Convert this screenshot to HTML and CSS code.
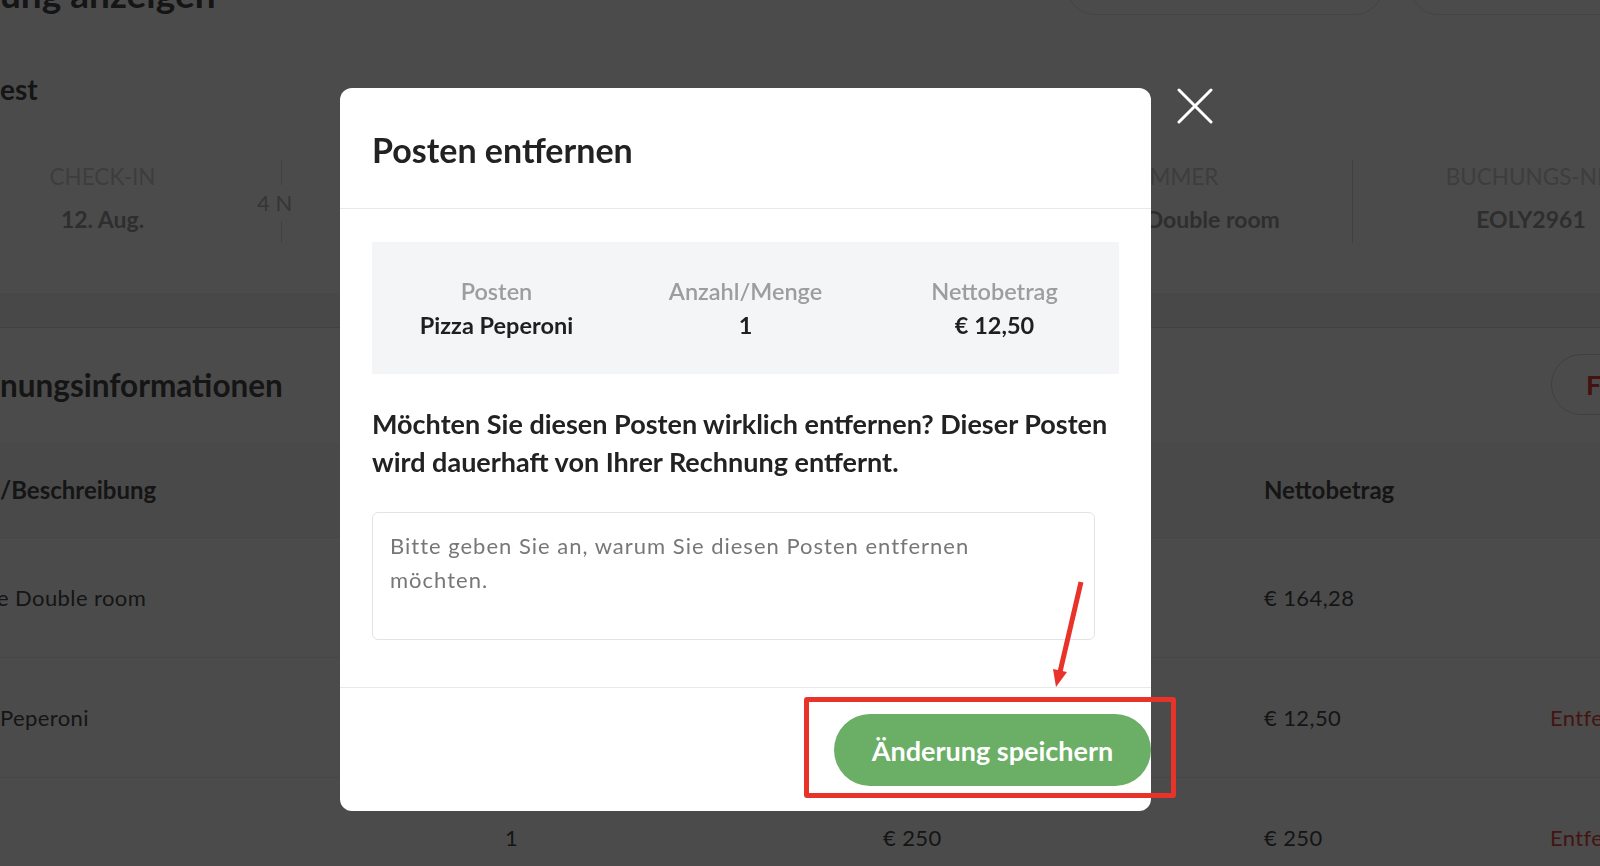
FILE: index.html
```html
<!DOCTYPE html>
<html lang="de">

<head>
  <title>Buchung anzeigen</title>
  <meta charset="UTF-8">
  <meta name="viewport" content="width=device-width, initial-scale=1.0">
  <link rel="stylesheet" href="styles.css">
</head>

<body>

<div class="page">
  <div class="summary">
    <div class="page-head">
      <h1 class="page-title">ung anzeigen</h1>
      <div class="head-actions">
        <span class="pill pill-wide"></span>
        <span class="pill"></span>
      </div>
    </div>

    <h2 class="guest">est</h2>

    <div class="stay">
      <div class="stay-col">
        <span class="stay-label">CHECK-IN</span>
        <span class="stay-value">12. Aug.</span>
      </div>
      <div class="stay-col">
        <span class="nights">4 N</span>
        <span class="stay-label">CHECK-OUT</span>
        <span class="stay-value">16. Aug.</span>
      </div>
      <div class="stay-col">
        <span class="stay-label">GÄSTE</span>
        <span class="stay-value">2</span>
      </div>
      <div class="stay-col">
        <span class="stay-label">ZIMMER</span>
        <span class="stay-value">Deluxe Double room</span>
      </div>
      <div class="stay-col">
        <span class="stay-label">BUCHUNGS-NR.</span>
        <span class="stay-value">EOLY2961</span>
      </div>
    </div>
  </div>

  <div class="invoice">
    <div class="invoice-head">
      <h2 class="section-title">nungsinformationen</h2>
      <button class="outline-btn">Fehler melden</button>
    </div>

    <div class="items">
      <div class="items-row items-header">
        <span>/Beschreibung</span>
        <span>Anzahl/Menge</span>
        <span>Preis</span>
        <span>Nettobetrag</span>
        <span></span>
      </div>
      <div class="items-row">
        <span class="cut">e Double room</span>
        <span>4</span>
        <span>€ 41,07</span>
        <span>€ 164,28</span>
        <span></span>
      </div>
      <div class="items-row">
        <span>Peperoni</span>
        <span>1</span>
        <span>€ 12,50</span>
        <span>€ 12,50</span>
        <span class="remove">Entfernen</span>
      </div>
      <div class="items-row">
        <span></span>
        <span>1</span>
        <span>€ 250</span>
        <span>€ 250</span>
        <span class="remove">Entfernen</span>
      </div>
    </div>
  </div>
</div>

<div class="overlay">
  <div class="modal">
    <div class="modal-head">
      <h3 class="modal-title">Posten entfernen</h3>
    </div>

    <div class="modal-body">
      <div class="item-box">
        <div class="item-cell">
          <span class="item-label">Posten</span>
          <span class="item-value">Pizza Peperoni</span>
        </div>
        <div class="item-cell">
          <span class="item-label">Anzahl/Menge</span>
          <span class="item-value">1</span>
        </div>
        <div class="item-cell">
          <span class="item-label">Nettobetrag</span>
          <span class="item-value">€ 12,50</span>
        </div>
      </div>

      <p class="question">Möchten Sie diesen Posten wirklich entfernen? Dieser Posten wird dauerhaft von Ihrer Rechnung entfernt.</p>

      <textarea class="reason" placeholder="Bitte geben Sie an, warum Sie diesen Posten entfernen möchten."></textarea>
    </div>

    <div class="modal-foot">
      <button class="save-btn">Änderung speichern</button>
    </div>

    <button class="close-btn" aria-label="Schließen">
      <svg width="36" height="36" viewBox="0 0 36 36">
        <path d="M2 2 L34 34 M34 2 L2 34" stroke="#fff" stroke-width="3" stroke-linecap="round" fill="none"/>
      </svg>
    </button>
  </div>

  <!-- Markierung aus dem Screenshot -->
  <div class="mark-box"></div>
  <svg class="mark-arrow" width="60" height="130" viewBox="0 0 60 130">
    <path d="M41 12 L20 102" stroke="#e8322a" stroke-width="5" fill="none"/>
    <polygon points="16,117 27,102 13,99" fill="#e8322a"/>
  </svg>
</div>

</body>

</html>
```

FILE: styles.css
```css
* {
  box-sizing: border-box;
}

body {
  margin: 0;
  width: 1600px;
  height: 866px;
  overflow: hidden;
  background: #f4f5f5;
  font-family: Lato, "Noto Sans", sans-serif;
  color: #4a4a4a;
}

/* page behind the dialog */

.summary {
  background: #fff;
  height: 293px;
}

.page-head {
  display: flex;
  justify-content: space-between;
  height: 35px;
}

.page-title {
  margin: -28px 0 0;
  font-size: 37px;
  line-height: 44px;
  font-weight: 700;
}

.head-actions {
  display: flex;
  gap: 27px;
  margin-top: -41px;
  margin-right: -60px;
}

.pill {
  width: 250px;
  height: 56px;
  border: 1px solid #e2e2e2;
  border-radius: 28px;
}

.pill-wide {
  width: 316px;
}

.guest {
  margin: 37px 0 0;
  font-size: 28px;
  line-height: 34px;
  font-weight: 700;
}

.stay {
  display: flex;
  margin: 54px 0 0 -76px;
}

.stay-col {
  position: relative;
  flex: 0 0 357px;
  display: flex;
  flex-direction: column;
  align-items: center;
  padding: 4px 0 9px;
  border-left: 1px solid #dadada;
}

.stay-col:first-child {
  border-left: none;
}

.stay-label {
  font-size: 22.5px;
  line-height: 26px;
  color: #cfcfcf;
}

.stay-value {
  margin-top: 14px;
  font-size: 23px;
  line-height: 30px;
  font-weight: 700;
  color: #9c9c9c;
}

.nights {
  position: absolute;
  left: -29px;
  top: 25px;
  padding: 4px 4px;
  background: #fff;
  font-size: 22px;
  line-height: 28px;
  color: #b4b4b4;
}

.invoice {
  margin-top: 34px;
  background: #fff;
  border-top: 1px solid #dddddd;
  height: 600px;
}

.invoice-head {
  display: flex;
  justify-content: space-between;
  align-items: center;
  padding-top: 26px;
}

.section-title {
  margin: 0;
  font-size: 31.5px;
  line-height: 34px;
  font-weight: 700;
}

.outline-btn {
  width: 250px;
  height: 61px;
  margin-right: -201px;
  padding: 0 0 0 34px;
  border: 1px solid #d6d6d6;
  border-radius: 31px;
  background: #fff;
  text-align: left;
  font-family: inherit;
  font-size: 27px;
  font-weight: 700;
  color: #e0443a;
}

.items {
  margin-top: 27px;
}

.items-row {
  display: grid;
  grid-template-columns: 505px 378px 381px 286px 1fr;
  align-items: center;
  height: 120px;
  border-top: 1px solid #eeeeee;
  font-size: 22px;
  line-height: 30px;
  letter-spacing: 0.4px;
  white-space: nowrap;
}

.items-header {
  height: 95px;
  border-top: none;
  background: #f8f8f8;
  font-size: 24px;
  letter-spacing: 0;
  font-weight: 700;
}

.cut {
  margin-left: -3px;
}

.remove {
  color: #e54a42;
}

/* dialog */

.overlay {
  position: fixed;
  inset: 0;
  display: flex;
  align-items: flex-start;
  padding: 88px 0 0 340px;
  background: rgba(0, 0, 0, 0.705);
}

.modal {
  position: relative;
  width: 811px;
  background: #fff;
  border-radius: 12px;
  color: #222;
}

.modal-head {
  padding: 41px 32px 37px;
  border-bottom: 1px solid #e8e8e8;
}

.modal-title {
  margin: 0;
  font-size: 34px;
  line-height: 42px;
  font-weight: 700;
}

.modal-body {
  padding: 33px 32px 47px;
}

.item-box {
  display: grid;
  grid-template-columns: repeat(3, 1fr);
  padding: 32px 0;
  background: #f4f5f6;
  text-align: center;
  font-size: 23.5px;
  line-height: 34px;
}

.item-cell {
  display: flex;
  flex-direction: column;
}

.item-label {
  font-weight: 600;
  color: #9d9d9d;
}

.item-value {
  font-weight: 700;
  color: #1f1f1f;
}

.question {
  margin: 31px 0 0;
  font-size: 27px;
  line-height: 38px;
  font-weight: 700;
}

.reason {
  display: block;
  width: 723px;
  height: 128px;
  margin-top: 31px;
  padding: 16px 64px 16px 17px;
  border: 1px solid #e3e3e3;
  border-radius: 6px;
  resize: none;
  font-family: inherit;
  font-size: 22px;
  line-height: 34px;
  letter-spacing: 1px;
  color: #222;
}

.reason::placeholder {
  color: #777;
}

.modal-foot {
  display: flex;
  justify-content: flex-end;
  padding: 26px 0 25px;
  border-top: 1px solid #e8e8e8;
}

.save-btn {
  width: 317px;
  height: 72px;
  border: none;
  border-radius: 36px;
  background: #6bae65;
  font-family: inherit;
  font-size: 27px;
  font-weight: 700;
  color: #fff;
  cursor: pointer;
}

.close-btn {
  position: absolute;
  top: 0;
  left: calc(100% + 26px);
  width: 36px;
  height: 36px;
  padding: 0;
  border: none;
  background: none;
  cursor: pointer;
}

.close-btn svg {
  display: block;
}

.mark-box {
  position: absolute;
  left: 804px;
  top: 697px;
  width: 372px;
  height: 101px;
  border: 5px solid #e8322a;
  border-radius: 3px;
}

.mark-arrow {
  position: absolute;
  left: 1040px;
  top: 570px;
}
```
